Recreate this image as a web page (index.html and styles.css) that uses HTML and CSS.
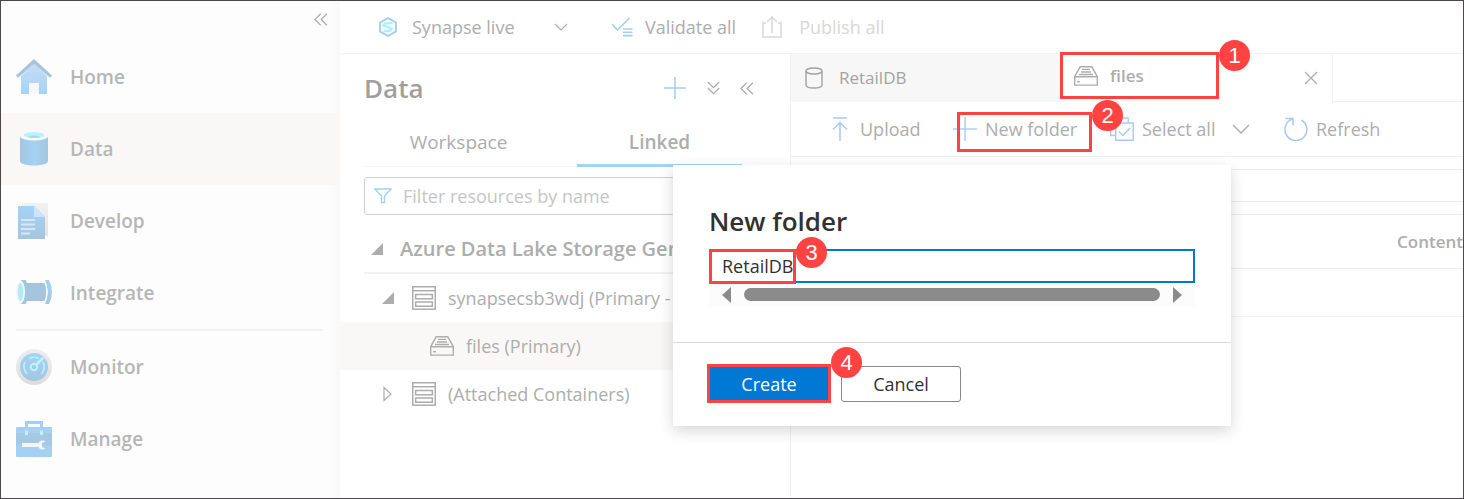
FILE: index.html
```html
<!DOCTYPE html>
<html lang="en">
<head>
<meta charset="utf-8">
<title>Synapse Studio - Data</title>
<link rel="stylesheet" href="styles.css">
</head>
<body>
<svg class="defs" width="0" height="0" aria-hidden="true">
  <defs>
    <linearGradient id="blueV" x1="0" y1="0" x2="0" y2="1"><stop offset="0" stop-color="#cbdcf9"/><stop offset="1" stop-color="#a4d3f3"/></linearGradient>
    <linearGradient id="blueH" x1="0" y1="0" x2="1" y2="0"><stop offset="0" stop-color="#a5c5df"/><stop offset=".5" stop-color="#a5d1f3"/><stop offset="1" stop-color="#a5c5df"/></linearGradient>
    <linearGradient id="blueD" x1="0" y1="0" x2="0" y2="1"><stop offset="0" stop-color="#a5d3f5"/><stop offset="1" stop-color="#a5c5e0"/></linearGradient>
    <linearGradient id="ring" x1="0" y1="0" x2="0" y2="1"><stop offset="0" stop-color="#eeeeee"/><stop offset="1" stop-color="#dcdcdc"/></linearGradient>
    <symbol id="drive" viewBox="0 0 24 20"><g fill="none" stroke="currentColor" stroke-width="1.4"><path d="M.7 10.7h22.6v8.4H.7zM.7 10.7 6.2.8h11.6l5.5 9.9M8 3.4h8M7 6h10M5 8.500h14"/><path d="M3 15.700h3"/></g></symbol>
    <symbol id="store" viewBox="0 0 24 24"><g fill="none" stroke="currentColor" stroke-width="1.5"><path d="M.7.7h22.600v22.600H.7zM.7 4.800h22.600M3.600 8.400h16.800v4.400H3.600zM3.600 16h16.800v4.200H3.600z"/></g></symbol>
    <symbol id="dblleft" viewBox="0 0 14 13"><path d="M6.700.8 1 6.500l5.700 5.700M12.900.8 7.200 6.500l5.700 5.700" fill="none" stroke="currentColor" stroke-width="1.300"/></symbol>
  </defs>
</svg>
<div class="frame">
  <nav class="sidebar" aria-label="Hubs">
    <button class="plain collapse" aria-label="Collapse"><svg width="14" height="13"><use href="#dblleft"/></svg></button>
    <a class="hub" href="#home"><svg width="36" height="36" viewBox="0 0 36 36"><path d="M5 17 18 4l13 13v18H5z" fill="url(#blueV)"/><path d="M18 0 36 16.500l-2 2.200L18 4.800 2 18.700 0 16.500z" fill="#a5c5df"/><path d="M13 24h10v11H13z" fill="#f7f7f7"/></svg>Home</a>
    <a class="hub hub-active" href="#data"><svg width="36" height="36" viewBox="0 0 36 36"><path d="M4 4v26c0 6 28 6 28 0V4z" fill="url(#blueH)"/><ellipse cx="18" cy="5" rx="14" ry="4.600" fill="#fafafa"/><ellipse cx="18" cy="4" rx="10.500" ry="3" fill="#b8f3fb"/><path d="M11 6q7-3.200 14 0-7 2-14 0" fill="#a5dbea"/></svg>Data</a>
    <a class="hub" href="#develop"><svg width="36" height="36" viewBox="0 0 36 36"><path d="M6 0h26v33H6z" fill="url(#ring)" opacity=".8"/><path d="M2 3h16l11 11v22H2z" fill="url(#blueD)"/><path d="M18 3l11 11H18z" fill="#cfe2fb"/><path d="M5 17h14M5 21.500h14M5 26h14M5 30.500h9" stroke="#d4e7fb" stroke-width="2"/></svg>Develop</a>
    <a class="hub" href="#integrate"><svg width="36" height="36" viewBox="0 0 36 36"><path d="M9 8h21v18H9z" fill="#a5c5df"/><path d="M5 5h5q4 12 0 24H5z" fill="#a5c5df"/><ellipse cx="4.500" cy="17" rx="4.500" ry="11.500" fill="#f5f7f8"/><ellipse cx="4.500" cy="17" rx="2.800" ry="9" fill="#b2ebf7"/><path d="M29 5h4q6 12 0 24h-4q5-12 0-24" fill="url(#blueD)"/><path d="M28.500 6q5 11 0 22" fill="none" stroke="#f4f6f8" stroke-width="1.500"/></svg>Integrate</a>
    <hr class="hub-rule">
    <a class="hub" href="#monitor"><svg width="36" height="36" viewBox="0 0 36 36"><circle cx="18" cy="18" r="18" fill="url(#ring)"/><circle cx="18" cy="18" r="14" fill="url(#blueD)"/><g fill="none" stroke="#b9f4fc" stroke-width="1.600"><path d="M9 13q-3 6 2 12M27 13q3 6-1.500 12M13.500 9.300q4.500-2.200 9 .2"/><circle cx="18" cy="18" r="3.200" stroke-width="2"/><path d="M20.500 15.500 27.500 8.500" stroke-width="3"/></g></svg>Monitor</a>
    <a class="hub" href="#manage"><svg width="36" height="36" viewBox="0 0 36 36"><path d="M10.500 7V1.500h15V7" fill="none" stroke="#a5d0f1" stroke-width="3"/><rect y="6" width="36" height="30" rx="1" fill="#a5d0f1"/><path d="M0 12h36v12H0z" fill="#a5c8e3"/><path d="M9 9.500h3V14H9zM24 9.500h3V14h-3z" fill="#b9f4fc"/><path d="M6 22h16.500a4.500 4.500 0 0 1 7-1.500L26 22v4l3.500 1.500a4.500 4.500 0 0 1-7-1.500H6z" fill="#f3f6f8"/></svg>Manage</a>
  </nav>
  <div class="main">
    <header class="topbar">
      <button class="plain live"><svg width="20" height="20" viewBox="0 0 20 20"><path d="m10 1 8 4.500v9L10 19l-8-4.500v-9z" fill="#eefcff" stroke="#a5cde9" stroke-width="1.800"/><path d="M14.500 6 7 6.500l-1.500 2 8 3-1 2-7 .8" fill="none" stroke="#b3ecfa" stroke-width="2.200"/></svg>Synapse live<svg class="push" width="14" height="8" viewBox="0 0 14 8"><path d="m1 1 6 6 6-6" fill="none" stroke="currentColor" stroke-width="1.200"/></svg></button>
      <button class="plain validate"><svg width="22" height="20" viewBox="0 0 22 20"><path d="m1 7 5.500 6L18.500 1M12 12h9.500M12 15.300h9.500M12 18.600h9.500" fill="none" stroke="#a5cff2" stroke-width="1.600"/></svg>Validate all</button>
      <button class="plain publish" disabled><svg width="20" height="22" viewBox="0 0 20 22"><path d="M4 7H1v14h18V7h-3M10 17V1M5 6l5-5 5 5" fill="none" stroke="currentColor" stroke-width="1.500"/></svg>Publish all</button>
    </header>
    <div class="columns">
      <section class="panel">
        <div class="panel-head">
          <h1>Data</h1>
          <button class="plain" aria-label="Add"><svg width="24" height="24" viewBox="0 0 24 24"><path d="M12 1v22M1 12h22" stroke="#a5cdf3" stroke-width="1.600"/></svg></button>
          <button class="plain" aria-label="Expand all"><svg width="13" height="14" viewBox="0 0 13 14"><path d="m.8 1 5.700 5.700L12.200 1M.8 7l5.700 5.700L12.200 7" fill="none" stroke="currentColor" stroke-width="1.300"/></svg></button>
          <button class="plain" aria-label="Collapse panel"><svg width="14" height="13"><use href="#dblleft"/></svg></button>
        </div>
        <div class="pivot" role="tablist">
          <button class="plain pivot-tab" role="tab">Workspace</button>
          <button class="plain pivot-tab pivot-on" role="tab" aria-selected="true">Linked</button>
        </div>
        <label class="filter"><svg width="18" height="16" viewBox="0 0 18 16"><path d="M1 1h16l-6.500 7v6.500h-3V8z" fill="none" stroke="#a5d0f2" stroke-width="1.400"/></svg><input type="text" aria-label="Filter resources" placeholder="Filter resources by name"></label>
        <div class="tree" role="tree">
          <div class="node node-root" role="treeitem"><svg width="12" height="12" viewBox="0 0 12 12"><path d="M12 0v12H0z" fill="currentColor"/></svg>Azure Data Lake Storage Gen2</div>
          <div class="node node-account" role="treeitem"><svg width="12" height="12" viewBox="0 0 12 12"><path d="M12 0v12H0z" fill="currentColor"/></svg><svg width="24" height="24"><use href="#store"/></svg>synapsecsb3wdj (Primary - </div>
          <div class="node node-files" role="treeitem"><svg width="24" height="20"><use href="#drive"/></svg>files (Primary)</div>
          <div class="node node-account" role="treeitem"><svg width="12" height="16" viewBox="0 0 12 16"><path d="M2 1.500v13L9 8z" fill="none" stroke="currentColor" stroke-width="1.200"/></svg><svg width="24" height="24"><use href="#store"/></svg>(Attached Containers)</div>
        </div>
      </section>
      <section class="editor">
        <div class="tabs" role="tablist">
          <button class="plain tab" role="tab"><svg width="18" height="22" viewBox="0 0 18 22"><g fill="none" stroke="currentColor" stroke-width="1.400"><ellipse cx="9" cy="4" rx="8" ry="3"/><path d="M1 4v14c0 4 16 4 16 0V4"/></g></svg>RetailDB</button>
          <div class="tab tab-on">
            <button class="plain tab-name callout-tab" role="tab" aria-selected="true"><svg width="24" height="20"><use href="#drive"/></svg>files<span class="badge">1</span></button>
            <button class="plain push tab-close" aria-label="Close"><svg width="14" height="14" viewBox="0 0 14 14"><path d="m1 1 12 12M13 1 1 13" stroke="currentColor" stroke-width="1.200"/></svg></button>
          </div>
          <div class="tab-space"></div>
        </div>
        <div class="toolbar">
          <button class="plain tool upload"><svg width="16" height="24" viewBox="0 0 16 24"><path d="M1 1h14M8 24V5.500M1 12.500l7-7 7 7" fill="none" stroke="#a9c9f4" stroke-width="1.500"/></svg>Upload</button>
          <button class="plain tool new-folder"><svg width="24" height="24" viewBox="0 0 24 24"><path d="M12 0v24M0 12h24" stroke="#b1cef5" stroke-width="1.500"/></svg>New folder<span class="mark"><span class="badge">2</span></span></button>
          <button class="plain tool select-all"><svg width="24" height="24" viewBox="0 0 24 24"><path d="M5.700 6h17.500v17.300H5.700zM5.700 18.500H.7V1h17.500v5M9 14.500l4 4 7-7.500" fill="none" stroke="#a9c9f4" stroke-width="1.400"/></svg>Select all<svg class="push" width="18" height="10" viewBox="0 0 18 10"><path d="m1 1 8 8 8-8" fill="none" stroke="currentColor" stroke-width="1.400"/></svg></button>
          <button class="plain tool"><svg width="24" height="24" viewBox="0 0 24 24"><path d="M1.500 1.500H9v7M8.500 2A11 11 0 1 0 17.500 3" fill="none" stroke="#a9c9f4" stroke-width="1.500"/></svg>Refresh</button>
        </div>
        <div class="path"></div>
        <table class="listing">
          <thead><tr><th scope="col">Content</th></tr></thead>
          <tbody><tr><td></td></tr></tbody>
        </table>
      </section>
    </div>
  </div>
  <div class="modal" role="dialog" aria-labelledby="dlg-title">
    <div class="modal-body">
      <h2 id="dlg-title">New folder</h2>
      <div class="name-field">
        <input type="text" aria-labelledby="dlg-title" value="RetailDB">
        <span class="mark"><span class="badge">3</span></span>
      </div>
      <div class="scroll"><svg width="9" height="16" viewBox="0 0 9 16"><path d="M9 0v16L0 8z" fill="currentColor"/></svg><span class="thumb"></span><svg width="9" height="16" viewBox="0 0 9 16"><path d="M0 0v16l9-8z" fill="currentColor"/></svg></div>
    </div>
    <div class="modal-foot">
      <button class="btn btn-primary">Create<span class="badge">4</span></button>
      <button class="btn">Cancel</button>
    </div>
  </div>
</div>
</body>
</html>
```
FILE: styles.css
```css
* { box-sizing: border-box; }
body {
  margin: 0;
  font: 18px/24px "Open Sans", "Noto Sans", sans-serif;
  color: #adadad;
  background: #fff;
}
svg { display: block; flex: none; }
.defs { position: absolute; }
.frame {
  position: relative;
  display: flex;
  min-height: 100vh;
  border: 1px solid #4c474b;
  overflow: hidden;
}
.plain {
  display: flex;
  align-items: center;
  padding: 0;
  border: 0;
  background: none;
  font: inherit;
  color: inherit;
  white-space: nowrap;
}
.push { margin-left: auto; }

/* hub navigation */
.sidebar {
  flex: none;
  width: 339px;
  background: linear-gradient(to right, #fdfdfd 328px, #f8f8f8);
}
.collapse { height: 40px; margin: 0 12px 0 auto; padding-bottom: 4px; }
.hub {
  display: flex;
  align-items: center;
  gap: 18px;
  height: 72px;
  padding-left: 15px;
  font-size: 19px;
  font-weight: 600;
  color: #b6b6b6;
  text-decoration: none;
}
.hub-active { background: #f9f8f7; }
.hub-rule { height: 2px; margin: 0 17px 0 15px; border: 0; background: #f1f1f1; }

/* top command bar */
.main { flex: 1; display: flex; flex-direction: column; min-width: 0; }
.topbar {
  display: flex;
  height: 53px;
  padding-left: 38px;
  border-bottom: 1px solid #f2f2f2;
}
.live { width: 190px; gap: 14px; margin-right: 43px; }
.validate { gap: 12px; margin-right: 26px; }
.publish { gap: 17px; color: #d8d8d8; }
.columns { flex: 1; display: flex; min-height: 0; }

/* resource panel */
.panel { flex: none; width: 450px; overflow: hidden; }
.panel-head {
  display: flex;
  align-items: center;
  gap: 20px;
  height: 68px;
  padding: 0 36px 0 24px;
}
h1 { flex: 1; margin: 0; font-size: 26px; line-height: 32px; font-weight: 600; color: #9f9f9f; }
.pivot {
  display: flex;
  gap: 36px;
  height: 45px;
  margin: 0 24px;
  padding: 0 24px 0 12px;
  border-bottom: 1px solid #f5f5f5;
}
.pivot-tab { flex: 1; justify-content: center; padding-bottom: 5px; font-size: 19px; }
.pivot-on { height: 45px; padding-bottom: 3px; border-bottom: 3px solid #a5d1f3; font-weight: 600; }
.filter {
  display: flex;
  align-items: center;
  gap: 11px;
  height: 38px;
  margin: 10px 24px 11px;
  padding: 0 9px;
  border: 1px solid #cfcfcf;
  border-radius: 3px;
}
.filter input { flex: 1; min-width: 0; padding: 0; border: 0; background: none; font: inherit; }
.filter input::placeholder { color: #c6c6c6; opacity: 1; }
.node { display: flex; align-items: center; gap: 12px; height: 48px; white-space: nowrap; }
.node-root { gap: 17px; margin-left: 24px; padding-left: 7px; border-bottom: 2px solid #f2f2f2; font-size: 20px; font-weight: 600; }
.node-account { padding-left: 42px; }
.node-account > svg + svg { margin-left: 6px; }
.node-files { padding-left: 90px; background: #f9f8f7; }

/* editor area */
.editor { flex: 1; min-width: 0; border-left: 1px solid #f0f0f0; }
.tabs { display: flex; height: 48px; font-size: 17px; }
.tab { display: flex; align-items: center; flex: none; width: 271px; }
.tabs > .plain { gap: 16px; padding-left: 14px; background: #f7f7f7; color: #a3a3a3; }
.tab-on { align-items: flex-start; padding-right: 14px; border-right: 1px solid #f0f0f0; font-weight: 600; }
.tab-name { gap: 12px; }
.tab-close { height: 48px; }
.tab-space { flex: 1; border-bottom: 1px solid #f0f0f0; }
.callout-tab {
  position: relative;
  width: 159px;
  height: 47px;
  margin: -2px 0 0 -2px;
  padding-left: 11px;
  border: 3px solid #ff4343;
}
.toolbar { display: flex; height: 55px; padding-left: 41px; border-bottom: 1px solid #ededf0; }
.tool { gap: 8px; }
.upload { gap: 12px; width: 121px; }
.new-folder { position: relative; width: 157px; }
.select-all { width: 140px; margin-right: 34px; }
.path { height: 33px; margin-top: 12px; border: 1px solid #ececf0; border-right: 0; }
.listing { width: 100%; margin-top: 12px; border-collapse: collapse; }
.listing th, .listing td { height: 54px; padding: 0; border-top: 1px solid #ececf0; text-align: right; font-size: 17px; font-weight: 600; }
.listing td { height: 48px; border-bottom: 1px solid #f2f2f4; }

/* numbered callouts */
.mark { position: absolute; border: 3px solid #ff4343; }
.new-folder .mark { left: 4px; top: 10px; width: 135px; height: 40px; }
.badge {
  position: absolute;
  z-index: 2;
  top: -15px;
  right: -34px;
  width: 31px;
  height: 31px;
  border-radius: 50%;
  background: #ff4343;
  color: #fff;
  font: 22px/31px "Liberation Sans", Arial, sans-serif;
  text-align: center;
}

/* dialog */
.modal {
  position: absolute;
  left: 672px;
  top: 164px;
  width: 558px;
  background: #fff;
  color: #323130;
  box-shadow: 0 5px 14px rgba(0, 0, 0, .16);
}
.modal-body { padding: 40px 36px 36px; }
h2 { margin: 0 0 12px; font-size: 26px; line-height: 32px; font-weight: 600; }
.name-field { position: relative; }
.name-field input {
  display: block;
  width: 100%;
  height: 34px;
  padding: 0 11px;
  border: 2px solid #0078d4;
  background: #fff;
  color: inherit;
  font: inherit;
}
.name-field .mark { left: 0; top: 0; width: 87px; height: 35px; }
.scroll {
  display: flex;
  align-items: center;
  gap: 13px;
  height: 23px;
  padding: 0 13px;
  background: #fcfcfc;
  color: #8b8b8b;
}
.thumb { flex: 1; height: 13px; border-radius: 7px; background: #8b8b8b; }
.modal-foot { display: flex; align-items: center; gap: 10px; height: 84px; padding: 0 34px 2px; border-top: 1px solid #d9d9d9; }
.btn {
  width: 120px;
  height: 36px;
  padding: 0;
  border: 1px solid #8a8886;
  border-radius: 3px;
  background: #fff;
  color: #323130;
  font: inherit;
}
.btn-primary {
  position: relative;
  width: 124px;
  height: 39px;
  border: 3px solid #ff4343;
  border-radius: 0;
  background: #0078d4;
  color: #fff;
}
.btn-primary .badge { top: -20px; }
```
